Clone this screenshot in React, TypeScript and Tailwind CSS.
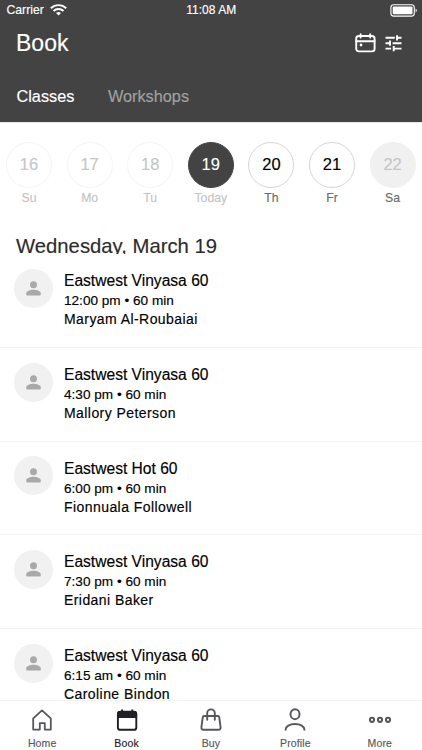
import React, { useState } from 'react';
import clsx from 'clsx';

interface Day {
  date: number;
  label: string;
  state: 'past' | 'today' | 'open' | 'closed';
}

interface StudioClass {
  id: number;
  name: string;
  time: string;
  teacher: string;
}

const days: Day[] = [
  { date: 16, label: 'Su', state: 'past' },
  { date: 17, label: 'Mo', state: 'past' },
  { date: 18, label: 'Tu', state: 'past' },
  { date: 19, label: 'Today', state: 'today' },
  { date: 20, label: 'Th', state: 'open' },
  { date: 21, label: 'Fr', state: 'open' },
  { date: 22, label: 'Sa', state: 'closed' },
];

const classes: StudioClass[] = [
  { id: 1, name: 'Eastwest Vinyasa 60', time: '12:00 pm • 60 min', teacher: 'Maryam Al-Roubaiai' },
  { id: 2, name: 'Eastwest Vinyasa 60', time: '4:30 pm • 60 min', teacher: 'Mallory Peterson' },
  { id: 3, name: 'Eastwest Hot 60', time: '6:00 pm • 60 min', teacher: 'Fionnuala Followell' },
  { id: 4, name: 'Eastwest Vinyasa 60', time: '7:30 pm • 60 min', teacher: 'Eridani Baker' },
  { id: 5, name: 'Eastwest Vinyasa 60', time: '6:15 am • 60 min', teacher: 'Caroline Bindon' },
];

function StatusBar() {
  return (
    <div className="grid h-5 grid-cols-3 items-center pl-[6.5px] pr-1 text-[12px] leading-5">
      <div className="flex items-center gap-1.5">
        <span className="text-[12.2px]">Carrier</span>
        <svg width="17" height="12" viewBox="0 0 17 12" fill="none" stroke="currentColor" strokeWidth="1.9">
          <path d="M0.8 4.3a11 11 0 0 1 15.4 0" />
          <path d="M3.5 7a7.2 7.2 0 0 1 10 0" />
          <path d="M8.5 11.6 6 9.1a3.6 3.6 0 0 1 5 0z" fill="currentColor" stroke="none" />
        </svg>
      </div>
      <span className="pr-[2px] text-center">11:08 AM</span>
      <svg className="justify-self-end" width="28" height="13" viewBox="0 0 28 13" fill="none">
        <rect x="0.9" y="0.7" width="23.4" height="11.4" rx="2.8" stroke="currentColor" strokeWidth="1.1" />
        <rect x="2.7" y="2.5" width="19.8" height="7.8" rx="1" fill="currentColor" />
        <path d="M25.6 4.4c1.5.6 1.5 3.4 0 4z" fill="currentColor" />
      </svg>
    </div>
  );
}

function Header() {
  const [tab, setTab] = useState('Classes');

  return (
    <header className="h-[122px] shrink-0 bg-[#424342] text-white">
      <StatusBar />
      <div className="flex h-[46px] items-center justify-between pl-4 pr-5">
        <h1 className="text-[23px] leading-[45px]">Book</h1>
        <div className="flex items-center gap-[9px]">
          <svg width="21" height="20" viewBox="0 0 21 20" fill="none" stroke="currentColor" strokeWidth="1.9" strokeLinecap="round">
            <rect x="1.2" y="3" width="18.4" height="15.4" rx="2.6" />
            <path d="M1.2 8.2h18.4M5.6 1.2v3.4M15.2 1.2v3.4" />
            <circle cx="6" cy="12" r="1.4" fill="currentColor" stroke="none" />
          </svg>
          <svg width="17" height="18" viewBox="0 0 17 18" fill="none" stroke="currentColor" strokeWidth="1.9">
            <path d="M.5 3.8h9.3M12 3.8h4.5M12 1.2v5.2M.5 9.2h4.8M5 6.6v5.2M7.6 9.2h8.9M.5 14.6h5.6M8.4 14.6h8.1M8.7 12v5.2" />
          </svg>
        </div>
      </div>
      <nav className="flex h-[56px] gap-[33.5px] pl-[16.5px] pt-[20px] text-[16.3px] leading-5">
        {['Classes', 'Workshops'].map(name => (
          <button
            key={name}
            onClick={() => setTab(name)}
            className={clsx('flex items-start', tab === name ? 'text-white' : 'text-[#a0a1a0]')}
          >
            {name}
          </button>
        ))}
      </nav>
    </header>
  );
}

function DayPicker() {
  return (
    <div className="h-[109px] shrink-0 border-t border-[#e6e6e6] pt-[18.5px]">
      <div className="-ml-[1.3px] -mr-[0.9px] grid grid-cols-7">
        {days.map(day => (
          <div key={day.date} className="flex flex-col items-center">
            <div
              className={clsx(
                'flex size-[46px] items-center justify-center rounded-full border text-[16.5px]',
                day.state === 'past' && 'border-[#f5f5f5] text-[#c6c6c6]',
                day.state === 'today' && 'border-[#424342] bg-[#424342] text-white',
                day.state === 'open' && 'border-[#d6d6d6] text-black',
                day.state === 'closed' && 'border-[#f0f0f0] bg-[#f0f0f0] text-[#c6c6c6]',
              )}
            >
              {day.date}
            </div>
            <span
              className={clsx(
                'mt-[2.5px] text-[12.2px] leading-[16px]',
                day.state === 'past' || day.state === 'today' ? 'text-[#c4c4c4]' : 'text-[#6b6b6b]',
              )}
            >
              {day.label}
            </span>
          </div>
        ))}
      </div>
    </div>
  );
}

function ClassRow({ item }: { item: StudioClass }) {
  return (
    <li className="flex h-[93.7px] shrink-0 gap-[11px] border-b border-[#f2f2f2] pl-[14px] pt-[14px]">
      <div className="mt-[0.6px] flex size-[39px] shrink-0 items-center justify-center rounded-full bg-[#f1f1f1]">
        <svg width="15" height="15" viewBox="0 0 15 15" fill="#a9a9a9">
          <circle cx="7.5" cy="3.8" r="3.5" />
          <path d="M.2 12.4C.2 10 4.4 8.8 7.5 8.8s7.3 1.2 7.3 3.6v1.2a1 1 0 0 1-1 1H1.2a1 1 0 0 1-1-1z" />
        </svg>
      </div>
      <div className="pt-[2px] text-black">
        <h3 className="text-[15.6px] leading-[21px]">{item.name}</h3>
        <p className="text-[13.6px] leading-[19px]">{item.time}</p>
        <p className="text-[14px] leading-[19px] tracking-[0.43px]">{item.teacher}</p>
      </div>
    </li>
  );
}

function HomeIcon() {
  return (
    <svg width="24" height="24" viewBox="0 0 24 24" fill="none" stroke="currentColor" strokeWidth="1.8" strokeLinejoin="round">
      <path d="M3.2 10.4 12 2.4l8.8 8v11.2h-6v-6.4H9.8v6.4H3.2z" />
    </svg>
  );
}

function BookIcon() {
  return (
    <svg width="24" height="24" viewBox="0 0 24 24" fill="none" stroke="currentColor" strokeWidth="1.9">
      <rect x="2.9" y="3.8" width="18.4" height="18" rx="2.4" />
      <path d="M4.7 3h14.8a2.6 2.6 0 0 1 2.6 2.6V10H2.1V5.6A2.6 2.6 0 0 1 4.7 3z" fill="currentColor" stroke="none" />
      <path d="M7.1 1.5V4M17.3 1.5V4" />
    </svg>
  );
}

function BuyIcon() {
  return (
    <svg width="24" height="24" viewBox="0 0 24 24" fill="none" stroke="currentColor" strokeWidth="1.9" strokeLinecap="round" strokeLinejoin="round">
      <path d="M5.2 8h13.6a1.4 1.4 0 0 1 1.4 1.2l1.4 10.2a2 2 0 0 1-2 2.3H4.4a2 2 0 0 1-2-2.3L3.8 9.2A1.4 1.4 0 0 1 5.2 8z" />
      <path d="M8.2 11.8V5.2a3.8 3.8 0 0 1 7.6 0v6.6" />
    </svg>
  );
}

function ProfileIcon() {
  return (
    <svg width="24" height="24" viewBox="0 0 24 24" fill="none" stroke="currentColor" strokeWidth="1.9">
      <ellipse cx="12" cy="6.2" rx="4.5" ry="5" />
      <path d="M2.6 22.6v-1c0-3.2 4-5.6 9.4-5.6s9.4 2.4 9.4 5.6v1" />
    </svg>
  );
}

function MoreIcon() {
  return (
    <svg width="24" height="24" viewBox="0 0 24 24" fill="none" stroke="currentColor" strokeWidth="2">
      <circle cx="4" cy="11.8" r="2.1" />
      <circle cx="12" cy="11.8" r="2.1" />
      <circle cx="20" cy="11.8" r="2.1" />
    </svg>
  );
}

const tabs = [
  { label: 'Home', Icon: HomeIcon },
  { label: 'Book', Icon: BookIcon },
  { label: 'Buy', Icon: BuyIcon },
  { label: 'Profile', Icon: ProfileIcon },
  { label: 'More', Icon: MoreIcon },
];

function TabBar() {
  return (
    <nav className="grid h-[50px] shrink-0 grid-cols-5 border-t border-[#f2f2f2] bg-white pt-[7px]">
      {tabs.map(({ label, Icon }) => (
        <button
          key={label}
          className={clsx('flex flex-col items-center', label === 'Book' ? 'text-[#1f2024]' : 'text-[#56575b]')}
        >
          <Icon />
          <span className="mt-[4px] text-[10.5px] leading-[14px] tracking-[0.15px]">{label}</span>
        </button>
      ))}
    </nav>
  );
}

export default function App() {
  return (
    <div className="flex h-[750px] w-[422px] flex-col overflow-hidden bg-white font-['Liberation_Sans',Arial,sans-serif] [-webkit-text-stroke:0.15px]">
      <Header />
      <DayPicker />
      <main className="flex min-h-0 flex-1 flex-col overflow-hidden">
        <h2 className="h-[23.3px] shrink-0 overflow-hidden pl-4 text-[20.3px] leading-[31px] text-[#2b2b2b]">
          Wednesday, March 19
        </h2>
        <ul className="flex flex-col">
          {classes.map(item => (
            <ClassRow key={item.id} item={item} />
          ))}
        </ul>
      </main>
      <TabBar />
    </div>
  );
}
